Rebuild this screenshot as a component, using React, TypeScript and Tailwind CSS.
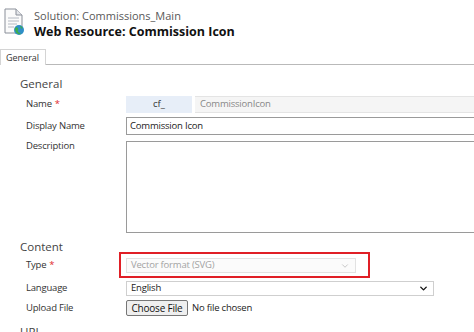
import React from 'react';
import { ChevronDown } from 'lucide-react';

const font = { fontFamily: '"Open Sans", "Noto Sans", sans-serif' };

const PageIcon = () => (
  <svg width="22" height="28" viewBox="0 0 22 28" className="shrink-0">
    <path d="M1 1 H12 L18 7 V25 H1 Z" fill="#fbfbfb" stroke="#8a8f99" strokeWidth="1" />
    <path d="M12 1 V7 H18" fill="#e4e6ea" stroke="#8a8f99" strokeWidth="1" />
    <g stroke="#b4b9c2" strokeWidth="1">
      <line x1="4" y1="10" x2="15" y2="10" />
      <line x1="4" y1="13" x2="15" y2="13" />
      <line x1="4" y1="16" x2="13" y2="16" />
      <line x1="4" y1="19" x2="10" y2="19" />
    </g>
    <circle cx="15" cy="22" r="5" fill="#2f8fc7" />
    <path d="M11 20 C13 18 15 20 14 22 C13 24 16 25 17 26 C14 27 11 25 11 20 Z" fill="#3fae4a" />
    <path d="M16 18 C18 18 19 20 18 21 C17 20 16 19 16 18 Z" fill="#3fae4a" />
  </svg>
);

const Label = ({ children, required }: { children: React.ReactNode; required?: boolean }) => (
  <div className="w-[100px] shrink-0 text-[9.5px] tracking-[-0.2px] text-[#333]">
    {children}
    {required && <span className="ml-[3px] text-[#e0282b]">*</span>}
  </div>
);

export default function App() {
  return (
    <div className="h-[332px] w-[474px] overflow-hidden bg-white" style={font}>
      {/* header */}
      <div className="flex h-[49px] items-start gap-[8px] pl-[4px] pt-[8px]">
        <PageIcon />
        <div className="flex flex-col">
          <span className="text-[11px] leading-[15px] text-[#595959]">Solution: Commissions_Main</span>
          <span className="text-[12.5px] font-bold leading-[17px] text-[#111]">Web Resource: Commission Icon</span>
        </div>
      </div>

      {/* tabs */}
      <div className="flex h-[16px]">
        <div className="flex h-[16px] w-[46px] items-center border-x border-t border-[#d4d4d4] bg-white pl-[5px] text-[9px] text-[#333]">
          General
        </div>
        <div className="flex-1 border-b border-[#b9b9b9]" />
      </div>

      <div className="pl-[20px]">
        <div className="mt-[11px] h-[16px] text-[11.5px] leading-[16px] text-[#444]">General</div>

        <div className="pl-[6px]">
          <div className="mt-[4px] flex h-[17px] items-center">
            <Label required>Name</Label>
            <div className="flex h-[17px] w-[66px] items-center justify-center bg-[#e7eef8] text-[9.5px] text-[#333]">cf_</div>
            <div className="ml-[3px] flex h-[17px] flex-1 items-center border-y border-[#e4e4e4] bg-[#f5f5f5] pl-[5px] text-[9.5px] tracking-[-0.2px] text-[#888]">
              CommissionIcon
            </div>
          </div>

          <div className="mt-[4px] flex h-[18px] items-center">
            <Label>Display Name</Label>
            <div className="flex h-[18px] flex-1 items-center border border-r-0 border-[#9a9a9a] pl-[3px] text-[9.5px] tracking-[-0.2px] text-[#222]">
              Commission Icon
            </div>
          </div>

          <div className="mt-[6px] flex items-start">
            <div className="-mt-[2px]">
              <Label>Description</Label>
            </div>
            <div className="h-[92px] flex-1 border border-r-0 border-[#9a9a9a]" />
          </div>
        </div>

        <div className="mt-[6px] h-[16px] text-[11.5px] leading-[16px] text-[#444]">Content</div>

        <div className="pl-[6px]">
          <div className="relative mt-[3px] flex h-[15px] items-center">
            <Label required>Type</Label>
            <div className="flex h-[15px] w-[230px] items-center justify-between border border-[#e2e2e2] bg-[#fbfbfb] pl-[4px] pr-[5px] text-[9.5px] tracking-[-0.2px] text-[#a3a3a3]">
              Vector format (SVG)
              <ChevronDown size={10} strokeWidth={1.5} className="text-[#a8a8a8]" />
            </div>
            <div className="absolute left-[93px] top-[-6px] h-[26px] w-[251px] border-2 border-[#e01f26]" />
          </div>

          <div className="mt-[8px] flex h-[15px] items-center">
            <Label>Language</Label>
            <div className="flex h-[15px] w-[308px] items-center justify-between border border-[#cfcfcf] pl-[4px] pr-[4px] text-[9.5px] tracking-[-0.2px] text-[#222]">
              English
              <ChevronDown size={11} strokeWidth={3} className="text-[#111]" />
            </div>
          </div>

          <div className="mt-[4px] flex h-[16px] items-center">
            <Label>Upload File</Label>
            <div className="flex h-[16px] w-[62px] items-center justify-center rounded-[2px] border border-[#767676] bg-[#efefef] text-[10px] tracking-[-0.2px] text-[#111]">
              Choose File
            </div>
            <span className="ml-[4px] text-[9.5px] tracking-[-0.2px] text-[#222]">No file chosen</span>
          </div>
        </div>

        <div className="mt-[8px] h-[16px] text-[11.5px] leading-[16px] text-[#444]">URL</div>
      </div>
    </div>
  );
}
